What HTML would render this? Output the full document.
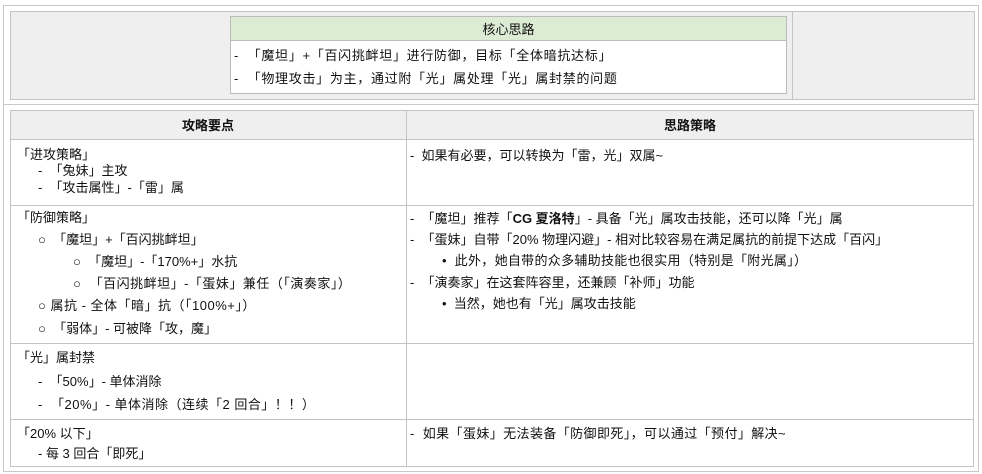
<!DOCTYPE html>
<html><head><meta charset="utf-8"><style>
body{margin:0;width:982px;height:474px;background:#fff;position:relative;overflow:hidden;font-family:"Liberation Sans","Noto Sans CJK SC",sans-serif;font-size:13px;color:#111}
.b{position:absolute;box-sizing:border-box}
.t{position:absolute;white-space:nowrap;line-height:16px}
</style></head><body>
<div class="b" style="left:3px;top:5px;width:976px;height:467px;border:1px solid #c8c8c8"></div>
<div class="b" style="left:3px;top:104px;width:976px;height:1px;background:#c8c8c8"></div>
<div class="b" style="left:10px;top:11px;width:965px;height:89px;background:#efefef;border:1px solid #c4c4c4"></div>
<div class="b" style="left:792px;top:11px;width:1px;height:89px;background:#c4c4c4"></div>
<div class="b" style="left:230px;top:16px;width:557px;height:78px;background:#fff;border:1px solid #bbb"></div>
<div class="b" style="left:231px;top:17px;width:555px;height:24px;background:#dcebd3;border-bottom:1px solid #bbb"></div>
<div class="t" style="left:230px;width:557px;text-align:center;top:22px">核心思路</div>
<div class="t" style="left:234px;top:48px;letter-spacing:0.7px">-&nbsp;&nbsp;「魔坦」+「百闪挑衅坦」进行防御，目标「全体暗抗达标」</div>
<div class="t" style="left:234px;top:71px;letter-spacing:0.7px">-&nbsp;&nbsp;「物理攻击」为主，通过附「光」属处理「光」属封禁的问题</div>

<div class="b" style="left:10px;top:110px;width:964px;height:357px;border:1px solid #c4c4c4"></div>
<div class="b" style="left:11px;top:111px;width:962px;height:29px;background:#efefef;border-bottom:1px solid #c4c4c4"></div>
<div class="b" style="left:406px;top:110px;width:1px;height:357px;background:#c4c4c4"></div>
<div class="b" style="left:11px;top:205px;width:962px;height:1px;background:#c4c4c4"></div>
<div class="b" style="left:11px;top:343px;width:962px;height:1px;background:#c4c4c4"></div>
<div class="b" style="left:11px;top:419px;width:962px;height:1px;background:#c4c4c4"></div>
<div class="t" style="left:10px;width:396px;text-align:center;top:118px;font-weight:bold">攻略要点</div>
<div class="t" style="left:406px;width:568px;text-align:center;top:118px;font-weight:bold">思路策略</div>

<div class="t" style="left:17px;top:147px">「进攻策略」</div>
<div class="t" style="left:38px;top:163px">-&nbsp;&nbsp;「兔妹」主攻</div>
<div class="t" style="left:38px;top:180px">-&nbsp;&nbsp;「攻击属性」-「雷」属</div>
<div class="t" style="left:410px;top:148px">-&nbsp;&nbsp;如果有必要，可以转换为「雷，光」双属~</div>

<div class="t" style="left:17px;top:210px">「防御策略」</div>
<div class="t" style="left:38px;top:232px">○&nbsp;&nbsp;「魔坦」+「百闪挑衅坦」</div>
<div class="t" style="left:73px;top:254px">○&nbsp;&nbsp;「魔坦」-「170%+」水抗</div>
<div class="t" style="left:73px;top:276px;letter-spacing:0.5px">○&nbsp;&nbsp;「百闪挑衅坦」-「蛋妹」兼任（「演奏家」）</div>
<div class="t" style="left:38px;top:298px;letter-spacing:0.5px">○ 属抗 - 全体「暗」抗（「100%+」）</div>
<div class="t" style="left:38px;top:321px">○&nbsp;&nbsp;「弱体」- 可被降「攻，魔」</div>
<div class="t" style="left:410px;top:211px">-&nbsp;&nbsp;「魔坦」推荐「<b>CG 夏洛特</b>」- 具备「光」属攻击技能，还可以降「光」属</div>
<div class="t" style="left:410px;top:232px">-&nbsp;&nbsp;「蛋妹」自带「20% 物理闪避」- 相对比较容易在满足属抗的前提下达成「百闪」</div>
<div class="t" style="left:442px;top:253px;letter-spacing:0.3px">•&nbsp;&nbsp;此外，她自带的众多辅助技能也很实用（特别是「附光属」）</div>
<div class="t" style="left:410px;top:275px">-&nbsp;&nbsp;「演奏家」在这套阵容里，还兼顾「补师」功能</div>
<div class="t" style="left:442px;top:296px">•&nbsp;&nbsp;当然，她也有「光」属攻击技能</div>

<div class="t" style="left:17px;top:350px">「光」属封禁</div>
<div class="t" style="left:38px;top:374px">-&nbsp;&nbsp;「50%」- 单体消除</div>
<div class="t" style="left:38px;top:397px;letter-spacing:0.5px">-&nbsp;&nbsp;「20%」- 单体消除（连续「2 回合」！！）</div>

<div class="t" style="left:17px;top:426px">「20% 以下」</div>
<div class="t" style="left:38px;top:446px">- 每 3 回合「即死」</div>
<div class="t" style="left:410px;top:426px;letter-spacing:0.4px">-&nbsp;&nbsp;如果「蛋妹」无法装备「防御即死」，可以通过「预付」解决~</div>
</body></html>
